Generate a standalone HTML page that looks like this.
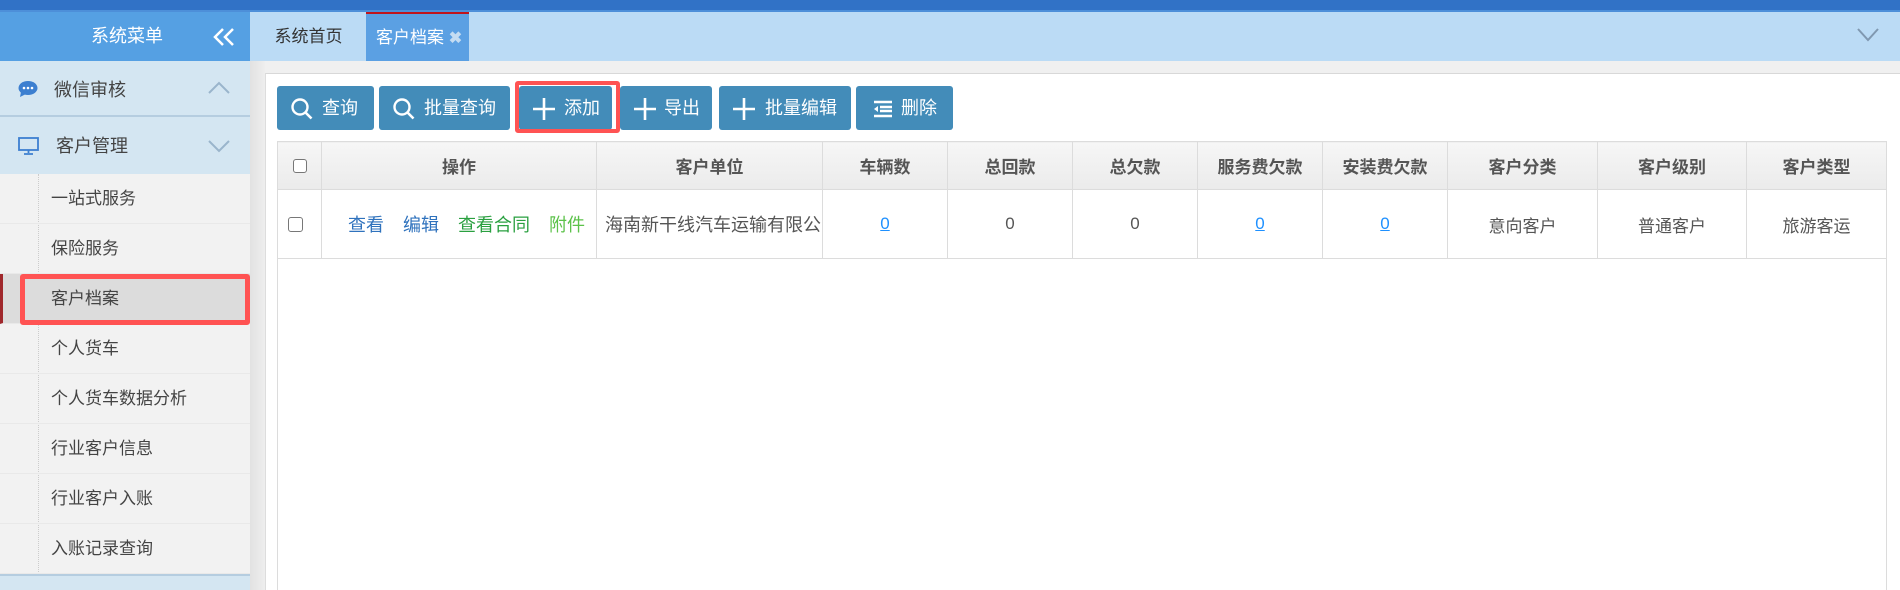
<!DOCTYPE html>
<html><head><meta charset="utf-8"><style>
*{margin:0;padding:0;box-sizing:border-box}
body{width:1900px;height:590px;overflow:hidden;background:#f0f0f0;font-family:"Liberation Sans","Noto Sans CJK SC",sans-serif;position:relative}
.abs{position:absolute}
.top{left:0;top:0;width:1900px;height:12px;background:#3172c6;border-bottom:2px solid #4d8fd9}
.sb{left:0;top:12px;width:250px;height:578px;background:#f2f2f2}
.sbh{left:0;top:12px;width:250px;height:49px;background:#55a0e3;color:#fff;font-size:18px;line-height:49px}
.sec{left:0;width:250px;background:#d4e6f2;font-size:18px;color:#444;border-bottom:2px solid #b5cde0}
.item{left:0;width:250px;height:50px;font-size:17px;color:#444;line-height:50px;padding-left:51px;border-bottom:1px solid #e9e9e9}
.shadow{left:250px;top:61px;width:15px;height:529px;background:linear-gradient(90deg,#e2e2e2,#eeeeee)}
.tabbar{left:250px;top:12px;width:1650px;height:49px;background:#bbdbf5}
.panel{left:265px;top:73px;width:1635px;height:517px;background:#fff;border-top:1px solid #d8d8d8;border-left:1px solid #ddd}
.btn{top:86px;height:44px;background:#438cb9;border-radius:3px;color:#fff;font-size:18px;line-height:44px}
.btn svg{position:absolute;left:13px;top:11px}
.btn span{position:absolute}
table{position:absolute;left:277px;top:141px;width:1609px;border-collapse:collapse;table-layout:fixed}
td,th{border:1px solid #dcdcdc;text-align:center;font-size:17px;white-space:nowrap;overflow:hidden}
th{height:48px;background:linear-gradient(#f6f6f6,#ebebeb);color:#555;font-weight:bold;font-size:17px}
td{height:69px;color:#555}
.cb{display:inline-block;width:14px;height:14px;border:1px solid #777;border-radius:3px;background:#fff;vertical-align:middle}
.u{color:#1e90ff;text-decoration:underline}
</style></head><body>
<div class="abs top"></div>
<div class="abs sb"></div>
<div class="abs sbh"><span class="abs" style="left:91px">系统菜单</span>
<svg class="abs" style="left:211px;top:15px" width="26" height="20" viewBox="0 0 26 20"><path d="M12 2L4 10l8 8M22 2l-8 8 8 8" fill="none" stroke="#fff" stroke-width="2.5"/></svg></div>
<div class="abs sec" style="top:61px;height:56px">
<svg class="abs" style="left:18px;top:19px" width="20" height="18" viewBox="0 0 20 18"><ellipse cx="10" cy="8" rx="9.5" ry="7" fill="#3c7fd0"/><path d="M3 12l-1 5 6-3z" fill="#3c7fd0"/><circle cx="6" cy="8" r="1.3" fill="#fff"/><circle cx="10" cy="8" r="1.3" fill="#fff"/><circle cx="14" cy="8" r="1.3" fill="#fff"/></svg>
<span class="abs" style="left:54px;top:15px">微信审核</span>
<svg class="abs" style="left:208px;top:20px" width="22" height="13" viewBox="0 0 22 13"><path d="M1 12L11 2l10 10" fill="none" stroke="#9ab5cc" stroke-width="2"/></svg></div>
<div class="abs sec" style="top:117px;height:57px;border-bottom:none">
<svg class="abs" style="left:18px;top:20px" width="21" height="18" viewBox="0 0 21 18"><rect x="1" y="1" width="19" height="12" fill="none" stroke="#3c7fd0" stroke-width="1.8"/><path d="M10.5 13v3M6 17h9" stroke="#3c7fd0" stroke-width="1.8"/></svg>
<span class="abs" style="left:56px;top:15px">客户管理</span>
<svg class="abs" style="left:208px;top:23px" width="22" height="13" viewBox="0 0 22 13"><path d="M1 1l10 10L21 1" fill="none" stroke="#9ab5cc" stroke-width="2"/></svg></div>
<div class="abs" style="left:38px;top:174px;width:0;height:400px;border-left:1px dotted #ccc"></div>
<div class="abs item" style="top:174px">一站式服务</div>
<div class="abs item" style="top:224px">保险服务</div>
<div class="abs item" style="top:274px;background:#dcdcdc;border-left:3px solid #a0282c;padding-left:48px">客户档案</div>
<div class="abs" style="left:20px;top:274px;width:230px;height:51px;border:5px solid #ff5353;border-radius:3px"></div>
<div class="abs item" style="top:324px">个人货车</div>
<div class="abs item" style="top:374px">个人货车数据分析</div>
<div class="abs item" style="top:424px">行业客户信息</div>
<div class="abs item" style="top:474px">行业客户入账</div>
<div class="abs item" style="top:524px">入账记录查询</div>
<div class="abs" style="left:0;top:574px;width:250px;height:16px;background:#d4e6f2;border-top:2px solid #b5cde0"></div>
<div class="abs shadow"></div>
<div class="abs tabbar"></div>
<div class="abs" style="left:252px;top:12px;width:113px;height:49px;font-size:17px;color:#333;line-height:49px;text-align:center">系统首页</div>
<div class="abs" style="left:366px;top:12px;width:103px;height:49px;background:#5ba0e3;border-top:2px solid #c0141c;font-size:17px;color:#fff;line-height:47px;padding-left:10px">客户档案 <span style="color:#c4dcf2;font-size:16px;font-weight:bold">✖</span></div>
<svg class="abs" style="left:1857px;top:28px" width="22" height="14" viewBox="0 0 22 14"><path d="M1 1l10 11L21 1" fill="none" stroke="#8098b0" stroke-width="2"/></svg>
<div class="abs panel"></div>
<div class="abs btn" style="left:277px;width:97px"><svg width="24" height="24" viewBox="0 0 24 24"><circle cx="10" cy="10" r="7.5" fill="none" stroke="#fff" stroke-width="2.4"/><path d="M15.5 15.5l6 6" stroke="#fff" stroke-width="2.6"/></svg><span style="left:45px">查询</span></div>
<div class="abs btn" style="left:379px;width:131px"><svg width="24" height="24" viewBox="0 0 24 24"><circle cx="10" cy="10" r="7.5" fill="none" stroke="#fff" stroke-width="2.4"/><path d="M15.5 15.5l6 6" stroke="#fff" stroke-width="2.6"/></svg><span style="left:45px">批量查询</span></div>
<div class="abs btn" style="left:519px;width:93px"><svg width="24" height="24" viewBox="0 0 24 24"><path d="M12 1v22M1 12h22" stroke="#fff" stroke-width="2.6"/></svg><span style="left:45px">添加</span></div>
<div class="abs" style="left:515px;top:81px;width:105px;height:52px;border:4px solid #ff5353;border-radius:3px"></div>
<div class="abs btn" style="left:620px;width:92px"><svg width="24" height="24" viewBox="0 0 24 24"><path d="M12 1v22M1 12h22" stroke="#fff" stroke-width="2.6"/></svg><span style="left:44px">导出</span></div>
<div class="abs btn" style="left:719px;width:132px"><svg width="24" height="24" viewBox="0 0 24 24"><path d="M12 1v22M1 12h22" stroke="#fff" stroke-width="2.6"/></svg><span style="left:46px">批量编辑</span></div>
<div class="abs btn" style="left:856px;width:97px"><svg width="22" height="22" viewBox="0 0 22 22" style="top:12px;left:16px"><path d="M2 4h18M8 9h12M8 13h12M2 18h18" stroke="#fff" stroke-width="2.4"/><path d="M6 8l-4 3 4 3z" fill="#fff"/></svg><span style="left:45px">删除</span></div>
<table>
<colgroup><col style="width:44px"><col style="width:275px"><col style="width:226px"><col style="width:125px"><col style="width:125px"><col style="width:125px"><col style="width:125px"><col style="width:125px"><col style="width:150px"><col style="width:149px"><col style="width:140px"></colgroup>
<tr><th><span class="cb"></span></th><th>操作</th><th>客户单位</th><th>车辆数</th><th>总回款</th><th>总欠款</th><th>服务费欠款</th><th>安装费欠款</th><th>客户分类</th><th>客户级别</th><th>客户类型</th></tr>
<tr><td style="text-align:left;padding-left:10px"><span class="cb" style="width:15px;height:15px"></span></td>
<td style="font-size:18px;text-align:left;padding-left:26px"><span style="color:#2f72bd">查看</span><span style="margin-left:19px;color:#2f72bd">编辑</span><span style="margin-left:19px;color:#2aa040">查看合同</span><span style="margin-left:19px;color:#5cc24a">附件</span></td>
<td style="text-align:left;padding-left:8px;text-overflow:clip;font-size:18px">海南新干线汽车运输有限公司</td>
<td><span class="u">0</span></td><td>0</td><td>0</td><td><span class="u">0</span></td><td><span class="u">0</span></td><td>意向客户</td><td>普通客户</td><td>旅游客运</td></tr>
</table>
<div class="abs" style="left:277px;top:258px;width:1px;height:332px;background:#dcdcdc"></div>
<div class="abs" style="left:1886px;top:258px;width:1px;height:332px;background:#dcdcdc"></div>
</body></html>
